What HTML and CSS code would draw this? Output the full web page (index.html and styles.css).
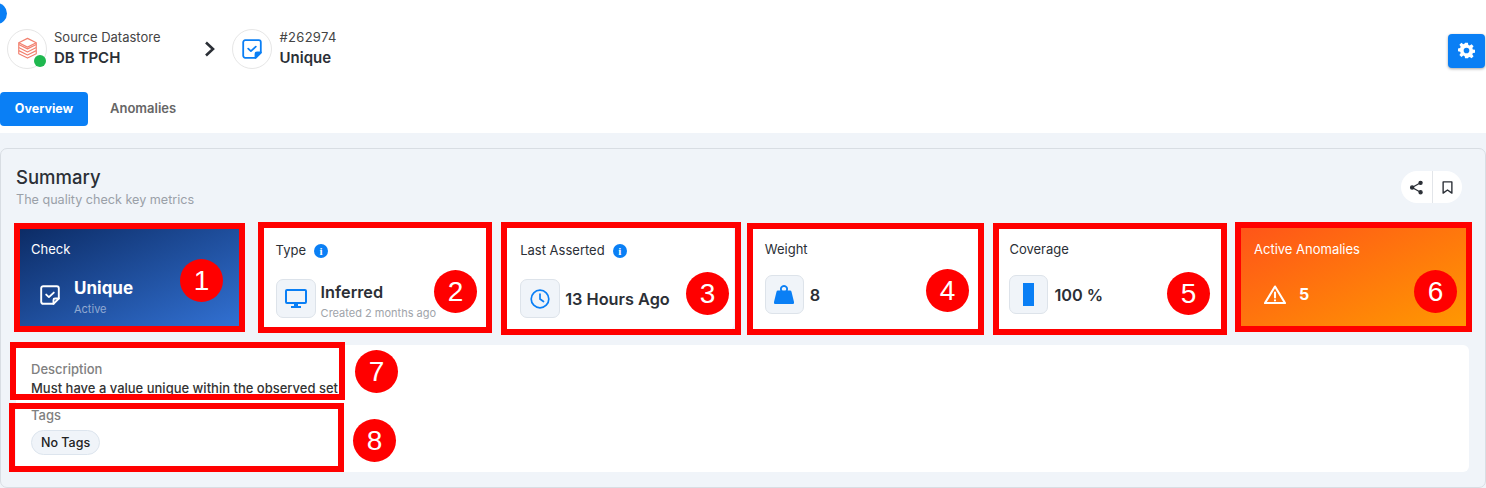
FILE: index.html
```html
<!DOCTYPE html>
<html lang="en">
<head>
<meta charset="UTF-8">
<meta name="viewport" content="width=device-width, initial-scale=1.0">
<title>Quality Check Summary</title>
<link rel="stylesheet" href="styles.css">
</head>
<body>
<span class="corner-dot"></span>

<header class="topbar">
    <div class="crumb">
        <span class="crumb-icon">
            <svg class="stack-logo" width="21" height="22" viewBox="0 0 24 25" fill="none" stroke="#f2806f" stroke-width="1.300" stroke-linejoin="round">
                <path d="M12 1.500 22 6.500v2L12 13.500 2 8.500v-2z"/>
                <path d="M2 6.500l10 5 10-5"/>
                <path d="M2 8.500v3.500l10 5 10-5V8.500"/>
                <path d="M2 12v3.500l10 5 10-5V12"/>
                <path d="M2 15.500V19l10 5 10-5v-3.500"/>
            </svg>
            <span class="status-dot"></span>
        </span>
        <div class="crumb-text">
            <span class="crumb-small">Source Datastore</span>
            <strong class="crumb-name">DB TPCH</strong>
        </div>
    </div>
    <svg class="chevron" width="12" height="16" viewBox="0 0 12 16" fill="none" stroke="#2b2f36" stroke-width="2.600">
        <path d="M2 1.500 9 8l-7 6.500"/>
    </svg>
    <div class="crumb crumb-check">
        <span class="crumb-icon">
            <svg width="20" height="20" viewBox="0 0 20 20" fill="none" stroke="#0a7ff5" stroke-width="1.800" stroke-linejoin="round" stroke-linecap="round">
                <path d="M13.500 18.800H3.200a2 2 0 0 1-2-2V3.200a2 2 0 0 1 2-2h13.600a2 2 0 0 1 2 2v10.300z"/>
                <path d="M18.800 13.500h-3.800a1.500 1.500 0 0 0-1.500 1.500v3.800z" fill="#0a7ff5"/>
                <path d="M6.200 9.600l2.700 2.500 4.900-4.500"/>
            </svg>
        </span>
        <div class="crumb-text">
            <span class="crumb-small crumb-id">#262974</span>
            <strong class="crumb-name">Unique</strong>
        </div>
    </div>
    <button class="gear-btn" aria-label="Settings">
        <svg width="17" height="17" viewBox="0 0 24 24" fill="#fff">
            <path fill-rule="evenodd" d="M10 1h4l.6 3.100 1.900.8L19.200 3.100 22 6l-1.800 2.600.8 1.900 3 .6v4l-3 .6-.8 1.900 1.800 2.600-2.800 2.800-2.700-1.800-1.900.8L14 23h-4l-.6-3-1.900-.8-2.700 1.800L2 18.200l1.800-2.600-.8-1.900-3-.6V9.100l3-.6.8-1.900L2 4l2.800-2.800 2.700 1.800 1.900-.8zM12 8a4 4 0 1 0 0 8 4 4 0 0 0 0-8z"/>
        </svg>
    </button>
</header>

<nav class="tabs">
    <a class="tab tab-active">Overview</a>
    <a class="tab">Anomalies</a>
</nav>

<main class="content">
    <section class="panel">
        <div class="panel-head">
            <div>
                <h2 class="panel-title">Summary</h2>
                <p class="panel-sub">The quality check key metrics</p>
            </div>
            <div class="actions">
                <span class="action">
                    <svg width="15" height="15" viewBox="0 0 24 24" fill="#2b2f36" stroke="#2b2f36" stroke-width="2">
                        <circle cx="18.500" cy="4.500" r="2.500"/><circle cx="5" cy="12" r="2.500"/><circle cx="18.500" cy="19.500" r="2.500"/>
                        <path d="M18.500 4.500 5 12l13.500 7.500" fill="none"/>
                    </svg>
                </span>
                <span class="action action-last">
                    <svg width="15" height="15" viewBox="0 0 24 24" fill="none" stroke="#2b2f36" stroke-width="2.200" stroke-linejoin="round">
                        <path d="M5 3h14v18l-7-5-7 5z"/>
                    </svg>
                </span>
            </div>
        </div>

        <div class="cards">
            <div class="card card-blue">
                <span class="card-label">Check</span>
                <div class="card-row row-indent">
                    <svg width="20" height="20" viewBox="0 0 20 20" fill="none" stroke="#fff" stroke-width="1.900" stroke-linejoin="round" stroke-linecap="round">
                        <path d="M13.500 18.800H3.200a2 2 0 0 1-2-2V3.200a2 2 0 0 1 2-2h13.600a2 2 0 0 1 2 2v10.300z"/>
                        <path d="M18.800 13.500h-3.800a1.500 1.500 0 0 0-1.500 1.500v3.800"/>
                        <path d="M6.200 9.600l2.700 2.500 4.900-4.500"/>
                    </svg>
                    <div class="value-stack">
                        <strong class="card-value">Unique</strong>
                        <span class="card-note note-light">Active</span>
                    </div>
                </div>
            </div>

            <div class="card">
                <span class="card-label label-info">Type <i class="info">i</i></span>
                <div class="card-row row-top">
                    <span class="icon-box">
                        <svg width="22" height="20" viewBox="0 0 22 20" fill="#0a7ff5">
                            <path fill-rule="evenodd" d="M2 0h18a2 2 0 0 1 2 2v11a2 2 0 0 1-2 2H2a2 2 0 0 1-2-2V2a2 2 0 0 1 2-2zm0 2v11h18V2z"/>
                            <path d="M9 15h4v2h3v2H6v-2h3z"/>
                        </svg>
                    </span>
                    <div class="value-stack">
                        <strong class="card-value">Inferred</strong>
                        <span class="card-note">Created 2 months ago</span>
                    </div>
                </div>
            </div>

            <div class="card">
                <span class="card-label label-info">Last Asserted <i class="info">i</i></span>
                <div class="card-row">
                    <span class="icon-box">
                        <svg width="20" height="20" viewBox="0 0 20 20" fill="none" stroke="#0a7ff5" stroke-width="1.700" stroke-linecap="round">
                            <circle cx="10" cy="10" r="8.800"/>
                            <path d="M10 5v5l3.500 2.500"/>
                        </svg>
                    </span>
                    <strong class="card-value">13 Hours Ago</strong>
                </div>
            </div>

            <div class="card">
                <span class="card-label">Weight</span>
                <div class="card-row row-plain">
                    <span class="icon-box">
                        <svg width="20" height="19" viewBox="0 0 20 19" fill="#0a7ff5">
                            <path fill-rule="evenodd" d="M10 0a4 4 0 0 1 3.700 5.500H16a1.500 1.500 0 0 1 1.500 1.200L20 17a1.500 1.500 0 0 1-1.500 2h-17A1.500 1.500 0 0 1 0 17L2.500 6.700A1.500 1.500 0 0 1 4 5.500h2.300A4 4 0 0 1 10 0zm0 2a2 2 0 0 0-1.500 3.500h3A2 2 0 0 0 10 2z"/>
                        </svg>
                    </span>
                    <strong class="card-value">8</strong>
                </div>
            </div>

            <div class="card">
                <span class="card-label">Coverage</span>
                <div class="card-row row-plain">
                    <span class="icon-box"><span class="coverage-bar"></span></span>
                    <strong class="card-value">100 %</strong>
                </div>
            </div>

            <div class="card card-orange">
                <span class="card-label">Active Anomalies</span>
                <div class="card-row row-alert">
                    <svg width="22" height="19" viewBox="0 0 22 19" fill="none" stroke="#fff" stroke-width="2.100" stroke-linejoin="round" stroke-linecap="round">
                        <path d="M11 1.500 21 18H1z"/>
                        <path d="M11 7.500v5M11 15.300v.2"/>
                    </svg>
                    <strong class="card-value anomaly-count">5</strong>
                </div>
            </div>
        </div>

        <div class="details">
            <span class="detail-label">Description</span>
            <p class="detail-text">Must have a value unique within the observed set</p>
            <span class="detail-label tags-label">Tags</span>
            <span class="chip">No Tags</span>
        </div>
    </section>
</main>

<!-- numbered callouts on top of the screenshot -->
<div class="mark mark-1"></div><span class="num num-1">1</span>
<div class="mark mark-2"></div><span class="num num-2">2</span>
<div class="mark mark-3"></div><span class="num num-3">3</span>
<div class="mark mark-4"></div><span class="num num-4">4</span>
<div class="mark mark-5"></div><span class="num num-5">5</span>
<div class="mark mark-6"></div><span class="num num-6">6</span>
<div class="mark mark-7"></div><span class="num num-7">7</span>
<div class="mark mark-8"></div><span class="num num-8">8</span>
</body>
</html>
```

FILE: styles.css
```css
* {
    box-sizing: border-box;
}
html, body {
    height: 488px;
    overflow: hidden;
}
body {
    margin: 0;
    position: relative;
    background-color: #fff;
    color: #2b2f36;
    font-family: Inter, "Noto Sans", sans-serif;
    font-size: 13px;
}
.corner-dot {
    position: absolute;
    left: -14px;
    top: 3px;
    width: 21px;
    height: 21px;
    border-radius: 50%;
    background-color: #0a7ff5;
}

/* top bar */
.topbar {
    display: flex;
    align-items: center;
    height: 92px;
    padding: 29px 1px 23px 7px;
}
.crumb {
    display: flex;
    align-items: center;
    gap: 7px;
}
.crumb-check {
    gap: 8px;
}
.crumb-icon {
    position: relative;
    display: flex;
    align-items: center;
    justify-content: center;
    width: 40px;
    height: 40px;
    border: 1px solid #e6e6e6;
    border-radius: 50%;
}
.stack-logo {
    margin-top: -2px;
}
.status-dot {
    position: absolute;
    right: 0;
    bottom: 1px;
    width: 12px;
    height: 12px;
    border-radius: 50%;
    background-color: #1fb84f;
}
.crumb-text {
    display: flex;
    flex-direction: column;
    gap: 3px;
    margin-top: -2px;
}
.crumb-small {
    font-size: 13px;
    line-height: 16px;
    color: #444;
}
.crumb-id {
    letter-spacing: 0.3px;
}
.crumb-name {
    font-size: 15px;
    line-height: 19px;
    font-weight: 600;
}
.chevron {
    margin: 0 16px 0 43px;
}
.gear-btn {
    display: flex;
    align-items: center;
    justify-content: center;
    width: 37px;
    height: 34px;
    margin-left: auto;
    margin-top: 3px;
    padding: 0;
    border: none;
    border-radius: 4px;
    background-color: #0a7ff5;
    box-shadow: 0 1px 3px rgba(0, 0, 0, 0.35);
}

/* tabs */
.tabs {
    display: flex;
    height: 41px;
}
.tab {
    height: 34px;
    padding: 0 22px;
    font-size: 13px;
    font-weight: 600;
    line-height: 32px;
    color: #666;
}
.tab-active {
    width: 88px;
    padding: 0;
    text-align: center;
    border-radius: 4px;
    background-color: #0a7ff5;
    color: #fff;
    font-size: 12.500px;
    font-weight: 700;
    line-height: 34px;
}

/* summary panel */
.content {
    height: 355px;
    padding-top: 15px;
    background-color: #f0f4f9;
}
.panel {
    height: 340px;
    width: 1486px;
    padding: 0 16px 0 15px;
    border: 1px solid #d8dde3;
    border-radius: 7px;
}
.panel-head {
    display: flex;
    justify-content: space-between;
    height: 77px;
    padding: 16px 7px 0 0;
}
.panel-title {
    margin: 0;
    font-size: 18.500px;
    line-height: 24px;
    font-weight: 500;
}
.panel-sub {
    margin: 3px 0 0;
    font-size: 12.600px;
    line-height: 16px;
    color: #9aa0a8;
}
.actions {
    display: flex;
    height: 32px;
    margin-top: 6px;
    border-radius: 16px;
    background-color: #fff;
}
.action {
    display: flex;
    align-items: center;
    justify-content: center;
    width: 31px;
}
.action-last {
    width: 30px;
    border-left: 1px solid #e2e5e9;
}

/* metric cards */
.cards {
    display: grid;
    grid-template-columns: repeat(6, 1fr);
    gap: 15.600px;
    width: 1452px;
}
.card {
    display: flex;
    flex-direction: column;
    height: 104px;
    padding: 15px;
    border-radius: 6px;
    background-color: #fff;
}
.card-blue {
    background: linear-gradient(to bottom right, #0b2a63, #3373d6);
    color: #fff;
}
.card-orange {
    background: linear-gradient(to bottom right, #ff5419, #ff9a00);
    color: #fff;
}
.card-label {
    display: flex;
    align-items: center;
    gap: 8px;
    font-size: 13px;
    line-height: 16px;
}
.label-info {
    padding-top: 1px;
    height: 16px;
}
.info {
    display: inline-block;
    width: 14px;
    height: 14px;
    margin-top: 2px;
    border-radius: 50%;
    background-color: #0a7ff5;
    color: #fff;
    font-family: "Liberation Serif", serif;
    font-size: 11px;
    font-style: normal;
    font-weight: 700;
    line-height: 14px;
    text-align: center;
}
.card-row {
    display: flex;
    align-items: center;
    gap: 5px;
    margin-top: 22px;
}
.row-top {
    align-items: flex-start;
}
.row-plain {
    gap: 6px;
    margin-top: 18px;
}
.row-plain .icon-box {
    width: 39px;
}
.row-indent {
    gap: 14px;
    margin-top: 15px;
    padding-left: 9px;
}
.row-alert {
    gap: 6px;
    margin-top: 27px;
    padding-left: 10px;
}
.icon-box {
    display: flex;
    flex-shrink: 0;
    align-items: center;
    justify-content: center;
    width: 40px;
    height: 39px;
    border: 1px solid #dde3ea;
    border-radius: 7px;
    background-color: #f0f4f9;
}
.coverage-bar {
    width: 11px;
    height: 23px;
    background-color: #0a7ff5;
}
.value-stack {
    display: flex;
    flex-direction: column;
    margin-top: 3px;
}
.row-indent .value-stack {
    margin-top: 6px;
}
.card-value {
    font-size: 16.300px;
    line-height: 20px;
    font-weight: 600;
}
.card-blue .card-value {
    font-size: 17px;
    font-weight: 700;
}
.card-note {
    margin-top: 3px;
    font-size: 11px;
    line-height: 16px;
    color: #a0a4aa;
}
.note-light {
    color: rgba(255, 255, 255, 0.5);
}
.anomaly-count {
    margin-left: 7px;
    font-size: 16px;
    font-weight: 700;
}

/* description and tags */
.details {
    display: flex;
    flex-direction: column;
    align-items: flex-start;
    width: 1453px;
    height: 127px;
    margin-top: 15px;
    padding: 16px 15px 0;
    border-radius: 6px;
    background-color: #fff;
}
.detail-label {
    font-size: 13px;
    line-height: 16px;
    font-weight: 500;
    color: #808080;
}
.detail-text {
    margin: 3px 0 0;
    font-size: 13px;
    line-height: 16px;
    font-weight: 500;
    color: #333;
}
.tags-label {
    margin-top: 11px;
}
.chip {
    height: 25px;
    margin-top: 7px;
    padding: 0 9px;
    border: 1px solid #dde5ee;
    border-radius: 13px;
    background-color: #f0f4f9;
    font-size: 12.500px;
    font-weight: 500;
    line-height: 23px;
    color: #222;
}

/* callouts */
.mark {
    position: absolute;
    border: 6px solid #f00;
}
.mark-1 { left: 14px; top: 223px; width: 231px; height: 109px; }
.mark-2 { left: 258px; top: 222px; width: 234px; height: 111px; }
.mark-3 { left: 501px; top: 222px; width: 240px; height: 113px; }
.mark-4 { left: 747px; top: 223px; width: 237px; height: 112px; }
.mark-5 { left: 993px; top: 223px; width: 234px; height: 112px; }
.mark-6 { left: 1235px; top: 222px; width: 237px; height: 110px; }
.mark-7 { left: 10px; top: 342px; width: 335px; height: 58px; }
.mark-8 { left: 9px; top: 403px; width: 335px; height: 69px; }
.num {
    position: absolute;
    width: 43px;
    height: 43px;
    border-radius: 50%;
    background-color: #f00;
    color: #fff;
    font-family: "Liberation Sans", Arial, sans-serif;
    font-size: 28px;
    line-height: 43px;
    text-align: center;
}
.num-1 { left: 180px; top: 259px; }
.num-2 { left: 434px; top: 270px; }
.num-3 { left: 686px; top: 272px; }
.num-4 { left: 926px; top: 269px; }
.num-5 { left: 1167px; top: 272px; }
.num-6 { left: 1414px; top: 270px; }
.num-7 { left: 355px; top: 350px; }
.num-8 { left: 353px; top: 419px; }
```
